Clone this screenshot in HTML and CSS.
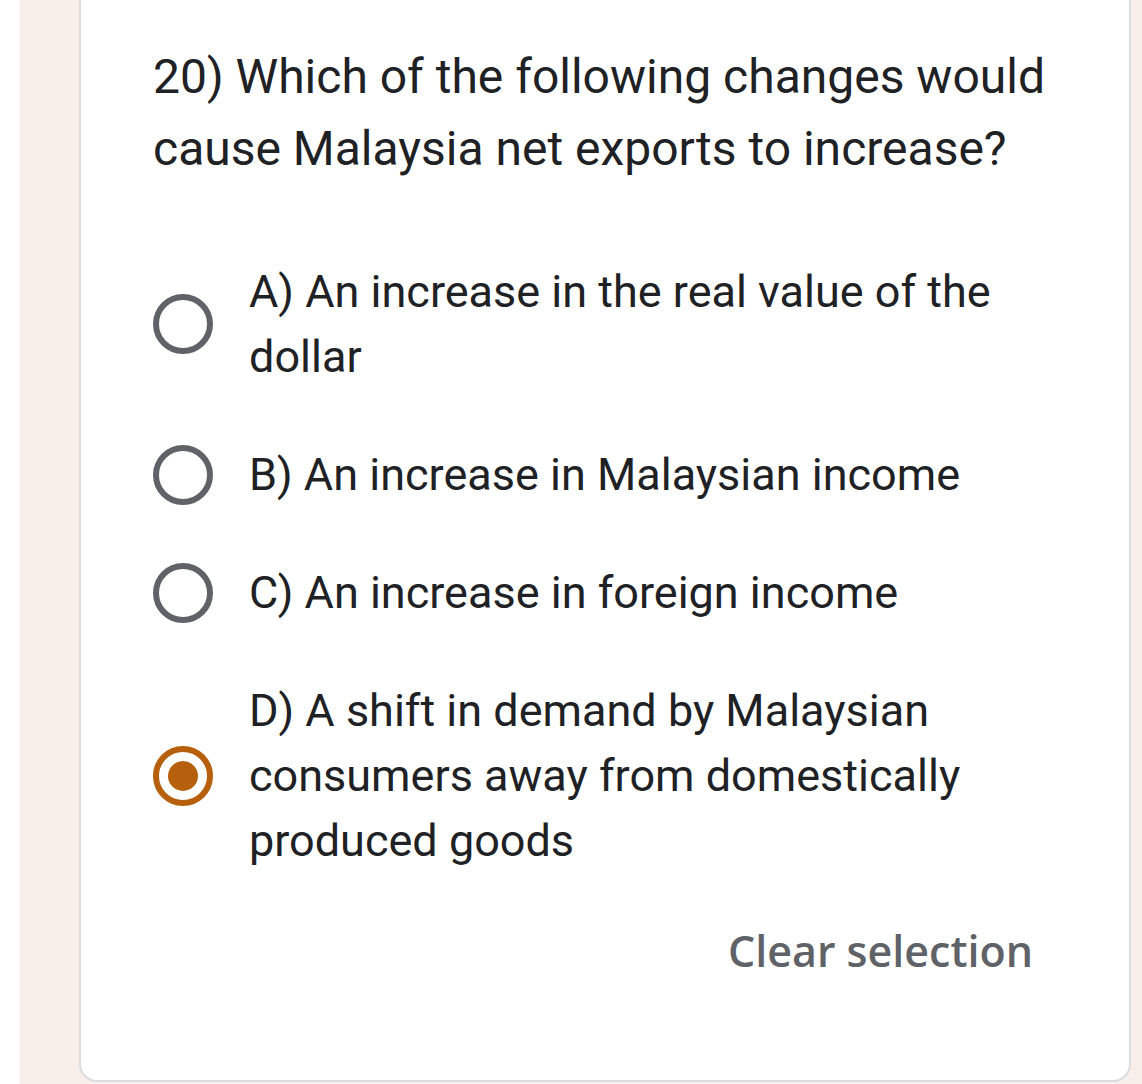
FILE: index.html
```html
<!DOCTYPE html>
<html>
<head>
<meta charset="utf-8">
<link rel="stylesheet" href="styles.css">
</head>
<body>
<div class="page">
  <div class="card">
    <div class="question">20) Which of the following changes would cause Malaysia net exports to increase?</div>
    <div class="options">
      <div class="option">
        <span class="radio"></span>
        <span class="label">A) An increase in the real value of the dollar</span>
      </div>
      <div class="option">
        <span class="radio"></span>
        <span class="label">B) An increase in Malaysian income</span>
      </div>
      <div class="option">
        <span class="radio"></span>
        <span class="label">C) An increase in foreign income</span>
      </div>
      <div class="option">
        <span class="radio checked"></span>
        <span class="label">D) A shift in demand by Malaysian consumers away from domestically produced goods</span>
      </div>
    </div>
    <div class="footer">
      <span class="clear">Clear selection</span>
    </div>
  </div>
</div>
</body>
</html>
```
FILE: styles.css
```css
html, body {
  margin: 0;
  padding: 0;
  background: #ffffff;
}
body {
  width: 1142px;
  height: 1084px;
  overflow: hidden;
}
.page {
  margin-left: 20px;
  height: 1084px;
  background: #f9efea;
  padding: 0 11px 0 59px;
  box-sizing: border-box;
}
.card {
  background: #ffffff;
  border: 2px solid #dadce0;
  border-top: none;
  border-radius: 0 0 18px 18px;
  height: 1082px;
  box-sizing: border-box;
  padding: 41px 56px 0 72px;
  font-family: Roboto, "Noto Sans", sans-serif;
  color: #202124;
}
.question {
  font-size: 48px;
  line-height: 72px;
}
.options {
  margin-top: 74px;
  display: flex;
  flex-direction: column;
  gap: 53px;
}
.option {
  display: flex;
  align-items: center;
}
.radio {
  flex: none;
  width: 48px;
  height: 48px;
  border: 6px solid #5f6368;
  border-radius: 50%;
  margin-right: 36px;
  position: relative;
}
.radio.checked {
  border-color: #b65f0c;
}
.radio.checked::after {
  content: "";
  position: absolute;
  left: 50%;
  top: 50%;
  width: 30px;
  height: 30px;
  margin: -15px 0 0 -15px;
  border-radius: 50%;
  background: #b65f0c;
}
.label {
  font-size: 45px;
  line-height: 65px;
}
.footer {
  display: flex;
  justify-content: flex-end;
  margin-top: 48px;
  padding-right: 40px;
}
.clear {
  font-family: "Open Sans", Roboto, sans-serif;
  font-weight: 600;
  font-size: 43px;
  color: #5f6368;
  line-height: 60px;
}
```
